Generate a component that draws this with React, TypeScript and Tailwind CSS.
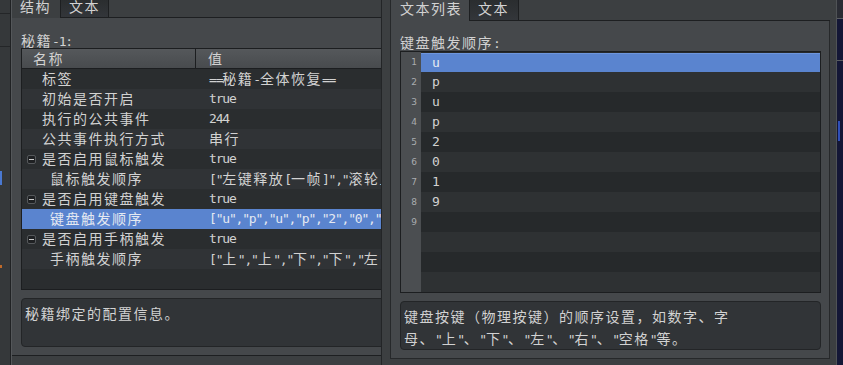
import React from 'react';

const CJK_RE = /([\u2E80-\u9FFF\u3000-\u303F\uFF00-\uFFEF]+)/;

// Latin runs stay in the narrow mono face, CJK runs get the wider CJK face
function T({ s }: { s: string }) {
  return (
    <>
      {s.split(CJK_RE).map((part, i) =>
        i % 2 === 1 ? (
          <span key={i} className="font-['Noto_Sans_CJK_SC',sans-serif] text-[14px] tracking-[1.5px]">
            {part}
          </span>
        ) : (
          <span key={i}>{part}</span>
        )
      )}
    </>
  );
}

type Row = { name: string; value: string; level: 0 | 1; expand?: boolean; selected?: boolean };

const rows: Row[] = [
  { name: '标签', value: '==秘籍-全体恢复==', level: 0 },
  { name: '初始是否开启', value: 'true', level: 0 },
  { name: '执行的公共事件', value: '244', level: 0 },
  { name: '公共事件执行方式', value: '串行', level: 0 },
  { name: '是否启用鼠标触发', value: 'true', level: 0, expand: true },
  { name: '鼠标触发顺序', value: '["左键释放[一帧]","滚轮上[一帧]"]', level: 1 },
  { name: '是否启用键盘触发', value: 'true', level: 0, expand: true },
  { name: '键盘触发顺序', value: '["u","p","u","p","2","0","1","9"]', level: 1, selected: true },
  { name: '是否启用手柄触发', value: 'true', level: 0, expand: true },
  { name: '手柄触发顺序', value: '["上","上","下","下","左","右"]', level: 1 },
];

const keys = ['u', 'p', 'u', 'p', '2', '0', '1', '9'];

function MinusBox() {
  return (
    <div className="flex h-[9px] w-[9px] shrink-0 items-center justify-center rounded-[2px] border border-[#55585b] bg-[#1f2123]">
      <div className="h-[1px] w-[5px] bg-[#d0d0d0]" />
    </div>
  );
}

function PropertyTable() {
  return (
    <div className="flex h-[242px] w-[420px] shrink-0 flex-col border border-[#1c1e20] bg-[#2a2d2f]">
      {/* Header */}
      <div className="flex h-[20px] border-b border-[#1c1e20] bg-gradient-to-b from-[#55585b] to-[#484b4e] leading-[19px]">
        <div className="w-[174px] shrink-0 border-r border-[#1c1e20] pl-[11px]">
          <T s="名称" />
        </div>
        <div className="pl-[12px]">
          <T s="值" />
        </div>
      </div>
      {rows.map((r, i) => (
        <div
          key={r.name}
          className={`flex h-[20px] items-center whitespace-nowrap leading-[20px] ${
            r.selected ? 'bg-[#5a84cf] text-[#e4e9f2]' : i % 2 === 0 ? 'bg-[#2a2d2f]' : 'bg-[#303336]'
          }`}
        >
          <div className="flex w-[174px] shrink-0 items-center">
            {r.level === 1 ? (
              <div className="pl-[28px]">
                <T s={r.name} />
              </div>
            ) : r.expand ? (
              <div className="flex items-center pl-[5px]">
                <MinusBox />
                <div className="pl-[6px]">
                  <T s={r.name} />
                </div>
              </div>
            ) : (
              <div className="pl-[20px]">
                <T s={r.name} />
              </div>
            )}
          </div>
          <div className="shrink-0 pl-[13px]">
            <T s={r.value} />
          </div>
        </div>
      ))}
    </div>
  );
}

function KeyList() {
  const lines = Array.from({ length: 12 }, (_, i) => i);
  return (
    <div className="flex h-[242px] w-[421px] shrink-0 border border-[#1c1e20]">
      <div className="w-[20px] bg-[#4b4e51]">
        {lines.map((i) => (
          <div
            key={i}
            className="h-[20px] pr-[4px] text-right font-['DejaVu_Sans',sans-serif] text-[9px] leading-[20px] tracking-normal text-[#a9acaf]"
          >
            {i < 9 ? i + 1 : ''}
          </div>
        ))}
      </div>
      <div className="flex-1">
        {lines.map((i) =>
          i === 0 ? (
            <div key={i} className="h-[20px] bg-[#26292b] pt-[1px]">
              <div className="h-[19px] border-t border-[#6d95dc] bg-[#5a84cf] pl-[11px] leading-[17px] text-[#e6ebf3]">
                {keys[i]}
              </div>
            </div>
          ) : (
            <div
              key={i}
              className={`h-[20px] pl-[11px] leading-[20px] ${i % 2 === 0 ? 'bg-[#26292b]' : 'bg-[#2e3133]'}`}
            >
              {keys[i] ?? ''}
            </div>
          )
        )}
      </div>
    </div>
  );
}

export default function App() {
  return (
    <div className="flex h-[365px] w-[843px] overflow-hidden bg-[#3c3f41] font-['DejaVu_Sans_Mono','Noto_Sans_CJK_SC',monospace] text-[13px] tracking-[-1.2px] text-[#d2d2d2]">
      {/* Window behind, left edge */}
      <div className="flex w-[11px] flex-col border-r border-[#202224] bg-[#35383a]">
        <div className="h-[13px]" />
        <div className="h-[1px] bg-[#242628]" />
        <div className="h-[32px]" />
        <div className="h-[1px] bg-[#242628]" />
        <div className="h-[124px]" />
        <div className="h-[14px] w-[2px] bg-[#4a78d0]" />
        <div className="h-[80px]" />
        <div className="h-[3px] w-[2px] bg-[#c06a2a]" />
      </div>

      {/* Left window */}
      <div className="flex w-[370px] flex-col overflow-hidden border-l border-[#54575a]">
        <div className="flex h-[18px] leading-[12px]">
          <div className="w-[48px] shrink-0 pl-[8px]">
            <T s="结构" />
          </div>
          <div className="w-[49px] shrink-0 border-x border-b border-[#1d1f21] bg-gradient-to-b from-[#2a2d2f] to-[#33363a] pl-[8px]">
            <T s="文本" />
          </div>
          <div className="flex-1 border-b border-[#1d1f21]" />
        </div>
        <div className="flex h-[338px] flex-col border-b border-[#1d1f21] bg-[#45484b] pl-[9px] pt-[15px]">
          <div className="h-[15px] leading-[15px]">
            <T s="秘籍-1:" />
          </div>
          <PropertyTable />
          <div className="mt-[8px] h-[49px] w-[420px] shrink-0 rounded-[4px] border border-[#232527] bg-[#313437] pl-[3px] pt-[4px] leading-[20px]">
            <T s="秘籍绑定的配置信息。" />
          </div>
        </div>
      </div>

      <div className="w-[1px] bg-[#232527]" />

      {/* Right window */}
      <div className="flex w-[461px]">
        <div className="w-[8px]" />
        <div className="flex w-[440px] flex-col">
          <div className="flex h-[21px] leading-[17px]">
            <div className="w-[79px] shrink-0 border-l border-[#26282a] bg-[#45484b] pl-[9px]">
              <T s="文本列表" />
            </div>
            <div className="w-[50px] shrink-0 border-x border-b border-[#1d1f21] bg-gradient-to-b from-[#2a2d2f] to-[#33363a] pl-[8px]">
              <T s="文本" />
            </div>
            <div className="flex-1 border-b border-[#1d1f21]" />
          </div>
          <div className="flex h-[338px] flex-col border-x border-b border-[#26282a] bg-[#45484b] pl-[9px] pt-[14px]">
            <div className="h-[16px] leading-[15px]">
              <T s="键盘触发顺序:" />
            </div>
            <KeyList />
            <div className="mt-[8px] h-[49px] w-[421px] shrink-0 rounded-[4px] border border-[#232527] bg-[#313437] pl-[3px] pt-[4px] leading-[21px]">
              <T s="键盘按键（物理按键）的顺序设置，如数字、字" />
              <br />
              <T s={'母、"上"、"下"、"左"、"右"、"空格"等。'} />
            </div>
          </div>
        </div>
        <div className="w-[6px]" />
        <div className="w-[1px] bg-[#505356]" />
        <div className="flex w-[6px] flex-col bg-[#141736]">
          <div className="h-[18px] bg-[#2a2c34]" />
          <div className="h-[1px] bg-[#5a5d62]" />
          <div className="h-[41px]" />
          <div className="h-[1px] bg-[#5a5d62]" />
          <div className="h-[60px]" />
          <div className="ml-[1px] h-[20px] w-[2px] bg-[#2f4fb8]" />
        </div>
      </div>
    </div>
  );
}
